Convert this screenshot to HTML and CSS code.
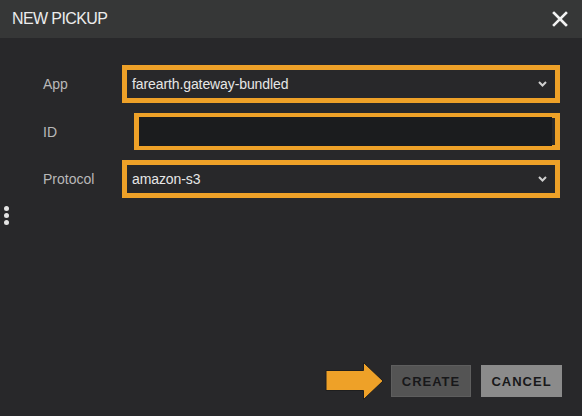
FILE: index.html
```html
<!DOCTYPE html>
<html lang="en">
<head>
  <meta charset="UTF-8">
  <title>New Pickup</title>
  <link rel="stylesheet" href="styles.css">
</head>
<body>
  <div class="dialog">
    <div class="dialog-header">
      <span class="dialog-title">NEW PICKUP</span>
      <svg class="close" width="16" height="16" viewBox="0 0 16 16">
        <path d="M2 2 L14 14 M14 2 L2 14" stroke="#f2f2f2" stroke-width="2.6" stroke-linecap="square"/>
      </svg>
    </div>

    <div class="handle"><i></i><i></i><i></i></div>

    <form class="dialog-body">
      <label class="field-label">App</label>
      <div class="field select highlight">
        <span>farearth.gateway-bundled</span>
        <svg class="chevron" width="9" height="6" viewBox="0 0 9 6">
          <path d="M1 1 L4.5 4.5 L8 1" fill="none" stroke="#d0d0d0" stroke-width="2"/>
        </svg>
      </div>

      <label class="field-label">ID</label>
      <div class="field id-field highlight">
        <input type="text" class="text-input">
      </div>

      <label class="field-label">Protocol</label>
      <div class="field select highlight">
        <span>amazon-s3</span>
        <svg class="chevron" width="9" height="6" viewBox="0 0 9 6">
          <path d="M1 1 L4.5 4.5 L8 1" fill="none" stroke="#d0d0d0" stroke-width="2"/>
        </svg>
      </div>
    </form>

    <div class="dialog-footer">
      <svg class="pointer" width="60" height="38" viewBox="0 0 60 38">
        <polygon points="1,8.5 38.5,8.5 38.5,0.5 58,19 38.5,37.5 38.5,28.5 1,28.5" fill="#eea128" stroke="#1e1e1e" stroke-width="1"/>
      </svg>
      <button type="button" class="btn btn-create">CREATE</button>
      <button type="button" class="btn btn-cancel">CANCEL</button>
    </div>
  </div>
</body>
</html>
```

FILE: styles.css
```css
body {
  margin: 0;
  background-color: #ffffff;
  font-family: "Liberation Sans", Arial, sans-serif;
}
.dialog {
  position: relative;
  width: 582px;
  height: 416px;
  background-color: #28282a;
  display: flex;
  flex-direction: column;
}
.dialog-header {
  height: 38px;
  background-color: #363737;
  display: flex;
  align-items: center;
  justify-content: space-between;
  padding: 0 14px 0 12px;
}
.dialog-title {
  color: #ececec;
  font-size: 16px;
  letter-spacing: -0.6px;
}
.close {
  display: block;
}
.handle {
  position: absolute;
  left: 4px;
  top: 206px;
  display: flex;
  flex-direction: column;
  gap: 2px;
}
.handle i {
  width: 5px;
  height: 5px;
  border-radius: 50%;
  background-color: #e4e4e4;
}
.dialog-body {
  display: grid;
  grid-template-columns: 79px 1fr;
  row-gap: 10px;
  align-items: center;
  margin: 0;
  padding: 27px 22px 0 43px;
}
.field-label {
  color: #b9b9b9;
  font-size: 14px;
}
.field {
  height: 38px;
  box-sizing: border-box;
  display: flex;
  align-items: center;
}
.highlight {
  border: 5px solid #eea128;
}
.select {
  justify-content: space-between;
  padding: 0 8px 0 5px;
  color: #e6e6e6;
  font-size: 14px;
  letter-spacing: -0.1px;
}
.chevron {
  display: block;
}
.id-field {
  margin-left: 12px;
  height: 37px;
  padding-right: 3px;
}
.text-input {
  flex: 1;
  height: 100%;
  border: none;
  margin: 0;
  background-color: #1b1c1e;
  outline: none;
}
.dialog-footer {
  margin-top: auto;
  display: flex;
  align-items: center;
  justify-content: flex-end;
  gap: 10px;
  padding: 0 20px 16px 0;
}
.pointer {
  display: block;
  margin-right: -4px;
}
.btn {
  height: 32px;
  border: none;
  font-family: "Liberation Sans", Arial, sans-serif;
  font-size: 13px;
  font-weight: bold;
  letter-spacing: 1px;
  color: #18181a;
}
.btn-create {
  width: 80px;
  background-color: #545454;
  border: 1px solid #5e5e5e;
}
.btn-cancel {
  width: 81px;
  background-color: #8b8b8b;
}
```
